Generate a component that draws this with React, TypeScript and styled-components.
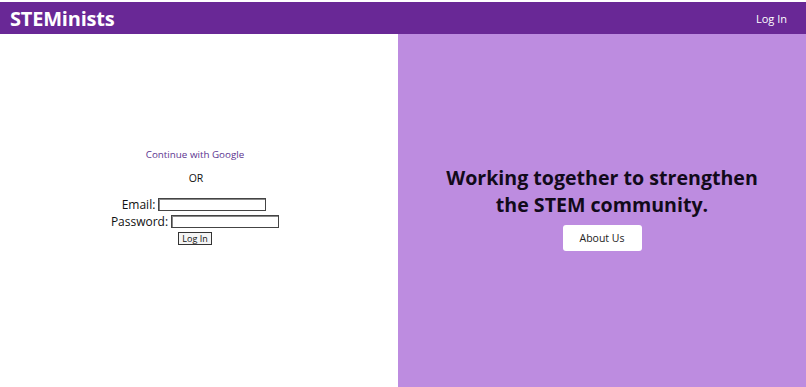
import React from "react";
import styled, { createGlobalStyle } from "styled-components";

const Global = createGlobalStyle`
  html, body { margin: 0; padding: 0; background: #ffffff; }
  body { font-family: "Open Sans", "Noto Sans", sans-serif; }
  * { box-sizing: border-box; }
`;

const Page = styled.div`
  width: 806px;
  height: 387px;
  display: flex;
  flex-direction: column;
  padding-top: 2px;
  background: #fff;
`;

const Header = styled.header`
  height: 32px;
  background: #692896;
  display: flex;
  align-items: center;
  justify-content: space-between;
  padding: 0 19px 0 10px;
`;

const Logo = styled.div`
  color: #fff;
  font-family: "Open Sans", sans-serif;
  font-weight: 700;
  font-size: 20px;
  letter-spacing: -0.2px;
`;

const NavLink = styled.a`
  color: #fff;
  font-size: 11px;
  text-decoration: none;
`;

const Main = styled.main`
  flex: 1;
  display: flex;
`;

const LeftPane = styled.section`
  width: 398px;
  display: flex;
  flex-direction: column;
  align-items: center;
  justify-content: center;
  padding-bottom: 32px;
  padding-right: 8px;
`;

const RightPane = styled.section`
  flex: 1;
  background: #bd8ce0;
  display: flex;
  flex-direction: column;
  align-items: center;
  justify-content: center;
  padding-bottom: 6px;
`;

const GoogleLink = styled.a`
  color: #5c3390;
  font-size: 9.8px;
  margin-top: 4px;
  text-decoration: none;
`;

const Or = styled.div`
  margin-top: 10px;
  margin-left: 2px;
  font-size: 10.5px;
  color: #111;
`;

const Form = styled.form`
  margin-top: 11px;
  display: flex;
  flex-direction: column;
  align-items: center;
`;

const Row = styled.label<{ $shift: number }>`
  display: flex;
  align-items: center;
  gap: 3px;
  font-size: 12px;
  color: #111;
  height: 17px;
  margin-left: ${(p) => p.$shift}px;
`;

const Input = styled.input<{ $w: number }>`
  width: ${(p) => p.$w}px;
  height: 13px;
  border: 1px solid #444;
  box-shadow: inset 1px 1px 0 #888;
  padding: 0;
  margin: 0;
  font-size: 10px;
`;

const SmallButton = styled.button`
  margin-top: 2px;
  margin-left: 0;
  font-family: "Open Sans", sans-serif;
  font-size: 9px;
  padding: 0 3px;
  height: 13px;
  line-height: 11px;
  border: 1px solid #333;
  background: #f4f4f4;
  color: #111;
`;

const Heading = styled.h1`
  margin: 0;
  text-align: center;
  font-size: 19.6px;
  line-height: 27px;
  font-weight: 700;
  color: #120a1a;
`;

const AboutButton = styled.button`
  margin-top: 7px;
  width: 79px;
  height: 26px;
  border: none;
  border-radius: 3px;
  background: #fff;
  color: #222;
  font-family: "Open Sans", sans-serif;
  font-size: 10.5px;
`;

export default function App() {
  return (
    <>
      <Global />
      <Page>
        <Header>
          <Logo>STEMinists</Logo>
          <NavLink href="#">Log In</NavLink>
        </Header>
        <Main>
          <LeftPane>
            <GoogleLink href="#">Continue with Google</GoogleLink>
            <Or>OR</Or>
            <Form onSubmit={(e) => e.preventDefault()}>
              <Row $shift={-2}>
                Email: <Input $w={108} type="email" />
              </Row>
              <Row $shift={0}>
                Password: <Input $w={108} type="password" />
              </Row>
              <SmallButton type="submit">Log In</SmallButton>
            </Form>
          </LeftPane>
          <RightPane>
            <Heading>
              Working together to strengthen
              <br />
              the STEM community.
            </Heading>
            <AboutButton>About Us</AboutButton>
          </RightPane>
        </Main>
      </Page>
    </>
  );
}
